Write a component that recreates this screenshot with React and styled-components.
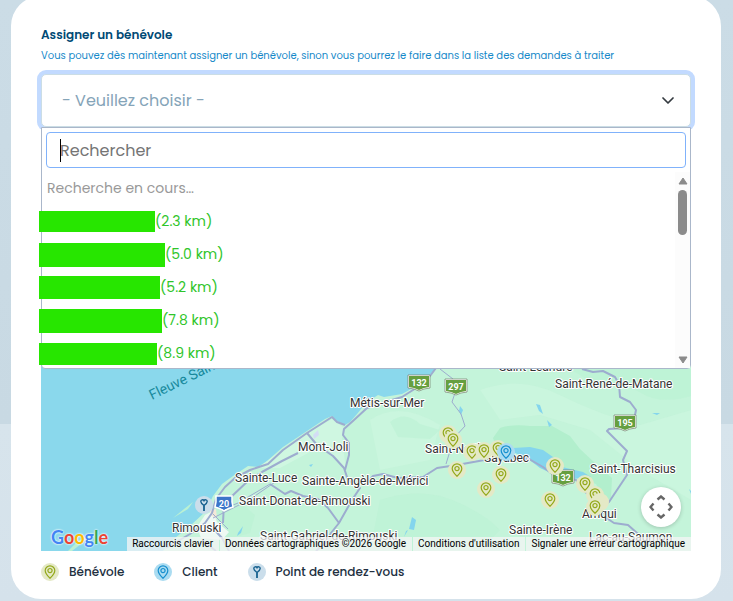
import React, { useState } from "react";
import styled, { createGlobalStyle } from "styled-components";

const volunteers = [
  { distance: "2.3", width: 116, height: 21 },
  { distance: "5.0", width: 126, height: 24 },
  { distance: "5.2", width: 121, height: 23 },
  { distance: "7.8", width: 123, height: 24 },
  { distance: "8.9", width: 118, height: 22 },
];

const towns = [
  ["Métis-sur-Mer", 350, 407],
  ["Mont-Joli", 298, 451],
  ["Sainte-Luce", 235, 482],
  ["Sainte-Angèle-de-Mérici", 302, 485],
  ["Saint-Donat-de-Rimouski", 239, 505],
  ["Rimouski", 172, 532],
  ["Saint-Gabriel-de-Rimouski", 260, 540],
  ["Saint-Noël", 425, 453],
  ["Sayabec", 484, 462],
  ["Saint-Léandre", 499, 371],
  ["Saint-René-de-Matane", 555, 388],
  ["Saint-Tharcisius", 590, 473],
  ["Amqui", 582, 518],
  ["Sainte-Irène", 509, 534],
  ["Lac-au-Saumon", 589, 541],
];

const shields = [
  ["132", 419, 383],
  ["297", 456, 387],
  ["195", 625, 423],
  ["132", 563, 478],
];

const pins = [
  ["volunteer", 448, 434],
  ["volunteer", 453, 440],
  ["volunteer", 472, 452],
  ["volunteer", 484, 451],
  ["volunteer", 498, 449],
  ["client", 506, 452],
  ["volunteer", 457, 470],
  ["volunteer", 501, 475],
  ["volunteer", 486, 489],
  ["volunteer", 555, 466],
  ["volunteer", 550, 500],
  ["volunteer", 585, 484],
  ["volunteer", 595, 495],
  ["blank", 600, 502],
  ["volunteer", 595, 507],
  ["meeting", 204, 505],
];

const pinColors = {
  volunteer: { fill: "#e4e9c6", stroke: "#93a81a" },
  blank: { fill: "#e4e9c6", stroke: "none" },
  client: { fill: "#abdcf1", stroke: "#168fce" },
  meeting: { fill: "#cbdeeb", stroke: "#17618f" },
};

const PinShape = ({ type }) => {
  const { fill, stroke } = pinColors[type];
  return (
    <g fill="none" stroke={stroke} strokeWidth="1.2">
      <circle r="9" fill={fill} stroke="none" />
      {type === "meeting" ? (
        <>
          <path
            d="M0 0.5C-1.5 -0.5 -3.2 -1.8 -3.2 -3.4C-3.2 -5.3 -0.8 -5.8 0 -4.2C0.8 -5.8 3.2 -5.3 3.2 -3.4C3.2 -1.8 1.5 -0.5 0 0.5Z"
            strokeWidth="1.4"
          />
          <path d="M0 0.5V6" strokeWidth="1.8" />
        </>
      ) : (
        <>
          <path d="M0 6.3C-2 4.5 -4.8 1.6 -4.8 -1.4A4.8 4.8 0 0 1 4.8 -1.4C4.8 1.6 2 4.5 0 6.3Z" />
          <circle cy="-1.4" r="2.1" />
        </>
      )}
    </g>
  );
};

const MapDrawing = () => (
  <MapSvg
    viewBox="41 151 650 400"
    preserveAspectRatio="xMidYMax slice"
    role="img"
    aria-label="Carte"
  >
    <rect x="-400" y="151" width="1500" height="400" fill="#8ad8ec" />
    <path
      d="M435 151V369L427 378L413 388L402 394L384 397L378 395L366 403L357 414L350 422L345 425L337 421L332 416L325 419L307 431L283 447L267 461L258 467L248 466L233 476L222 484L213 496L205 512L190 526L170 542L163 551H1100V151Z"
      fill="#c4f4da"
    />
    <g fill="#cff7e1">
      <path d="M258 468L283 449L307 433L332 419L344 428L342 438L346 470L330 452L310 452L280 468Z" />
      <path d="M480 390Q520 375 560 395T640 425L691 410V500L640 470L590 430L540 415L500 420Z" opacity=".5" />
      <path d="M370 420Q400 400 440 425L430 460L380 470Z" opacity=".5" />
    </g>
    <g fill="#baf1d3">
      <path d="M390 422Q405 410 420 424L440 430L430 439L398 437Z" opacity=".6" />
      <path d="M570 369H691V396Q660 405 641 393T596 385Z" opacity=".6" />
      <path d="M380 500Q420 487 452 500T500 530L480 551H370Z" opacity=".5" />
      <path d="M215 510L240 502L255 515L250 533L225 540Z" opacity=".6" />
    </g>
    <path
      d="M493 438L500 428Q512 424 530 426L552 426L570 436L580 449L596 464L612 478L611 498L605 502L596 484L575 477L540 460L515 449L496 447Z"
      fill="#b2efcd"
    />
    <path d="M173 518L184 509L193 502L188 509Z" fill="#baf1d3" />
    <path d="M68 551L77 542L88 535L86 540L72 551Z" fill="#baf1d3" />
    <path d="M205 515L213 511L217 522L229 532L222 540L201 538L197 527Z" fill="#eef9f3" />
    <path d="M209 510L216 509L217 519L212 516Z" fill="#f4e8d8" />
    <path d="M313 435L318 430L319 435L314 439Z" fill="#d3dcf5" />
    <g fill="#84d5ed">
      <path d="M513 448L530 447L543 450L553 457L562 467L583 472L591 477L573 479L553 474L540 468L527 458L515 453Z" />
      <path d="M536 404L540 405L543 414L539 411Z" />
      <path d="M547 420L552 425L549 427Z" />
      <path d="M460 406L463 410L461 415L459 411Z" />
      <path d="M412 517L416 520L414 530L409 529Z" />
      <path d="M408 530L404 537L406 531Z" />
      <path d="M309 465L313 464L311 467Z" />
      <path d="M238 533L243 526L241 533L237 536Z" />
      <path d="M652 413L660 413L657 415Z" />
      <path d="M689 489L691 491V494Z" />
    </g>
    <g fill="none" stroke="#9daccf" strokeWidth="2" strokeLinejoin="round">
      <path d="M436 368L427 380L413 390L402 397L385 402L367 408L354 420L344 429L343 435L349 443L349 455L345 470" />
      <path d="M345 425L337 422L332 417L307 433L283 450L268 464L250 470L235 478L225 487L216 499L212 513L205 523L190 534L166 548" />
      <path d="M307 433L317 445L333 456L344 468L348 480L360 488L352 500L339 523L331 533L327 541L316 551" />
      <path d="M298 453L282 461L262 472L249 480L231 497L224 503L223 523" />
      <path d="M366 484L373 476L383 474L398 478L423 477L437 468L457 465L490 459L505 457L529 459L543 467L555 476L576 480L583 490L598 503L608 519L614 523L628 525L637 533L647 545" />
      <path d="M270 484L285 494L291 491L303 496L318 499L328 508L339 523" />
      <path d="M582 369L593 372L603 371L615 377L619 384L620 397L630 402L636 410L634 420L625 428L609 429L607 431L627 451L623 460L627 475L609 502L595 510" />
      <path d="M202 540L216 551M210 525L222 538L229 551" />
    </g>
    <g fill="none" stroke="#9daccf" strokeWidth="1">
      <path d="M440 369L453 379L456 390L452 402L461 414L465 426L454 438L446 464" />
      <path d="M278 480L249 500L213 518M41 551" />
      <path d="M213 514L228 529M221 510L238 503L270 484" />
    </g>
    <text
      transform="translate(152 400) rotate(-26)"
      fontFamily="Roboto, sans-serif"
      fontSize="14"
      fill="#16889b"
    >
      Fleuve Saint-Laurent
    </text>
    <TownLabels>
      {towns.map(([name, x, y]) => (
        <text key={name} x={x} y={y}>
          {name}
        </text>
      ))}
    </TownLabels>
    {shields.map(([number, x, y]) => (
      <g key={`${number}-${x}`} transform={`translate(${x} ${y})`}>
        <path
          d="M-11 -8H11V5L5 6L0 8L-5 6L-11 5Z"
          fill="#fff"
          stroke="#72806a"
          strokeWidth=".7"
        />
        <path d="M-10 -7H10V4L5 5L0 7L-5 5L-10 4Z" fill="#669f40" />
        <ShieldText y="3">{number}</ShieldText>
      </g>
    ))}
    <g transform="translate(224 503)">
      <path
        d="M-8 -7H8V-1L9 4Q4 5 0 8Q-4 5 -9 4L-8 -1Z"
        fill="#3c75c9"
        stroke="#fff"
        strokeWidth="1.5"
      />
      <ShieldText y="4">20</ShieldText>
    </g>
    {pins.map(([type, x, y]) => (
      <g key={`${x}-${y}`} transform={`translate(${x} ${y})`}>
        <PinShape type={type} />
      </g>
    ))}
  </MapSvg>
);

const LegendEntry = ({ type, children }) => (
  <LegendItem>
    <svg width="18" height="18" viewBox="-9 -9 18 18" aria-hidden="true">
      <PinShape type={type} />
    </svg>
    {children}
  </LegendItem>
);

const App = () => {
  const [search, setSearch] = useState("");

  return (
    <>
      <GlobalStyle />
      <Card>
        <Title htmlFor="volunteer">Assigner un bénévole</Title>
        <Hint>
          Vous pouvez dès maintenant assigner un bénévole, sinon vous pourrez le
          faire dans la liste des demandes à traiter
        </Hint>
        <SelectWrapper>
          <Select id="volunteer" defaultValue="">
            <option value="">- Veuillez choisir -</option>
          </Select>
          <Chevron width="12" height="8" viewBox="0 0 12 8" aria-hidden="true">
            <path
              d="M1 1L6 6L11 1"
              fill="none"
              stroke="#343a40"
              strokeWidth="1.7"
              strokeLinecap="round"
              strokeLinejoin="round"
            />
          </Chevron>
          <Dropdown>
            <SearchBox>
              <SearchInput
                type="text"
                aria-label="Rechercher"
                placeholder="Rechercher"
                value={search}
                onChange={(e) => setSearch(e.target.value)}
              />
              <Caret />
            </SearchBox>
            <Results>
              <OptionList>
                <Loading>Recherche en cours…</Loading>
                {volunteers.map(({ distance, width, height }) => (
                  <Option key={distance}>
                    <HiddenName $width={width} $height={height} />({distance} km)
                  </Option>
                ))}
              </OptionList>
              <Scrollbar>
                <svg width="10" height="8" viewBox="0 0 10 8">
                  <path d="M5 1L9 7H1Z" fill="#8b8b8b" stroke="#8b8b8b" strokeLinejoin="round" />
                </svg>
                <Thumb />
                <svg width="10" height="8" viewBox="0 0 10 8">
                  <path d="M5 7L9 1H1Z" fill="#8b8b8b" stroke="#8b8b8b" strokeLinejoin="round" />
                </svg>
              </Scrollbar>
            </Results>
          </Dropdown>
        </SelectWrapper>
        <MapFrame>
          <MapDrawing />
          <GoogleLogo href="#google" aria-label="Google">
            <Letter $color="#4285f4">G</Letter>
            <Letter $color="#ea4335">o</Letter>
            <Letter $color="#fbbc05">o</Letter>
            <Letter $color="#4285f4">g</Letter>
            <Letter $color="#34a853">l</Letter>
            <Letter $color="#ea4335">e</Letter>
          </GoogleLogo>
          <CameraButton type="button" aria-label="Commandes de la caméra">
            <svg width="24" height="24" viewBox="0 0 24 24">
              <g fill="none" stroke="#666" strokeWidth="2.4">
                <path d="M8.5 4.5L12 1.5L15.5 4.5" />
                <path d="M8.5 19.5L12 22.5L15.5 19.5" />
                <path d="M4.5 8.5L1.5 12L4.5 15.5" />
                <path d="M19.5 8.5L22.5 12L19.5 15.5" />
              </g>
            </svg>
          </CameraButton>
          <Attribution>
            <AttributionButton type="button">Raccourcis clavier</AttributionButton>
            <AttributionText>Données cartographiques ©2026 Google</AttributionText>
            <AttributionLink href="#conditions">Conditions d'utilisation</AttributionLink>
            <AttributionLink href="#erreur">
              Signaler une erreur cartographique
            </AttributionLink>
          </Attribution>
        </MapFrame>
        <Legend>
          <LegendEntry type="volunteer">Bénévole</LegendEntry>
          <LegendEntry type="client">Client</LegendEntry>
          <LegendEntry type="meeting">Point de rendez-vous</LegendEntry>
        </Legend>
      </Card>
    </>
  );
};

export default App;

const GlobalStyle = createGlobalStyle`
  * {
    box-sizing: border-box;
  }
  body {
    margin: 0;
    min-height: 100vh;
    overflow: hidden;
    font-family: Poppins, Inter, sans-serif;
    background: linear-gradient(#cbdce6, #c8d9e3 424px, #d7e4ec 424px, #d5e2eb);
  }
`;

const Card = styled.main`
  margin: -4px 12px 0 11px;
  padding: 30px 30px 18px;
  border-radius: 30px;
  background: #fff;
`;

const Title = styled.label`
  display: block;
  font-size: 12px;
  line-height: 18px;
  font-weight: 600;
  color: #004a75;
`;

const Hint = styled.p`
  margin: 4px 0 10px;
  font-size: 10px;
  line-height: 16px;
  color: #1689c9;
`;

const SelectWrapper = styled.div`
  position: relative;
`;

const Select = styled.select`
  display: block;
  width: 100%;
  height: 53px;
  padding: 0 20px;
  appearance: none;
  border: 1px solid #cbdde5;
  border-radius: 5px;
  box-shadow: 0 0 0 4px #c2daff;
  background: #fff;
  font-family: inherit;
  font-size: 16px;
  color: #85a4b8;
`;

const Chevron = styled.svg`
  position: absolute;
  top: 23px;
  right: 17px;
  pointer-events: none;
`;

const Dropdown = styled.div`
  position: absolute;
  z-index: 1;
  top: 100%;
  left: 0;
  right: 0;
  border: 1px solid #aab7ca;
  border-radius: 0 0 4px 4px;
  background: #fff;
`;

const SearchBox = styled.div`
  position: relative;
  padding: 4px;
`;

const SearchInput = styled.input`
  display: block;
  width: 100%;
  height: 36px;
  padding: 0 13px;
  border: 1px solid #80b2fb;
  border-radius: 4px;
  outline: none;
  font-family: inherit;
  font-size: 16px;
  color: #212529;

  &::placeholder {
    color: #757575;
    opacity: 1;
  }
`;

const Caret = styled.span`
  position: absolute;
  top: 11px;
  left: 18px;
  width: 1px;
  height: 23px;
  background: #000;
`;

const Results = styled.div`
  display: flex;
  height: 196px;
`;

const OptionList = styled.ul`
  flex: 1;
  margin: 0;
  padding: 0 5px;
  list-style: none;
  font-size: 14px;
`;

const Loading = styled.li`
  line-height: 33px;
  color: #999;
`;

const Option = styled.li`
  display: flex;
  align-items: center;
  height: 33px;
  color: #2fc52a;
`;

const HiddenName = styled.span`
  width: ${({ $width }) => $width}px;
  height: ${({ $height }) => $height}px;
  margin-left: -8px;
  background: #27e600;
`;

const Scrollbar = styled.div`
  display: flex;
  flex-direction: column;
  align-items: center;
  width: 15px;
  padding: 5px 0 4px;
  background: #fcfcfc;

  svg:last-child {
    margin-top: auto;
  }
`;

const Thumb = styled.div`
  width: 9px;
  height: 45px;
  margin-top: 5px;
  border-radius: 5px;
  background: #8b8b8b;
`;

const MapFrame = styled.section`
  position: relative;
  height: 400px;
  margin-top: 24px;
  overflow: hidden;
`;

const MapSvg = styled.svg`
  display: block;
  width: 100%;
  height: 100%;
`;

const TownLabels = styled.g`
  font-family: Roboto, sans-serif;
  font-size: 12px;
  fill: #333;
  stroke: #fff;
  stroke-width: 2px;
  stroke-linejoin: round;
  paint-order: stroke;
`;

const ShieldText = styled.text`
  font-family: Roboto, sans-serif;
  font-size: 9px;
  font-weight: 700;
  text-anchor: middle;
  fill: #fff;
`;

const GoogleLogo = styled.a`
  position: absolute;
  left: 10px;
  bottom: 3px;
  font-family: Lato, sans-serif;
  font-size: 18px;
  line-height: 22px;
  font-weight: 700;
  text-decoration: none;
  text-shadow: 0 0 2px #fff, 0 0 2px #fff;
`;

const Letter = styled.span`
  color: ${({ $color }) => $color};
`;

const CameraButton = styled.button`
  position: absolute;
  right: 10px;
  bottom: 24px;
  display: flex;
  align-items: center;
  justify-content: center;
  width: 40px;
  height: 40px;
  padding: 0;
  border: none;
  border-radius: 50%;
  box-shadow: 0 1px 4px rgba(0, 0, 0, 0.2);
  background: #fff;
`;

const Attribution = styled.div`
  position: absolute;
  right: 0;
  bottom: 0;
  display: flex;
  gap: 1px;
`;

const AttributionText = styled.span`
  padding: 0 6px 0 5px;
  border: none;
  background: rgba(245, 245, 245, 0.75);
  font-family: Roboto, sans-serif;
  font-size: 10px;
  line-height: 14px;
  white-space: nowrap;
  text-decoration: none;
  color: #000;
`;

const AttributionButton = styled(AttributionText).attrs({ as: "button" })``;

const AttributionLink = styled(AttributionText).attrs({ as: "a" })``;

const Legend = styled.div`
  display: flex;
  gap: 30px;
  padding-top: 12px;
`;

const LegendItem = styled.div`
  display: flex;
  align-items: center;
  gap: 10px;
  font-size: 12px;
  line-height: 18px;
  font-weight: 500;
  color: #22303f;
`;
